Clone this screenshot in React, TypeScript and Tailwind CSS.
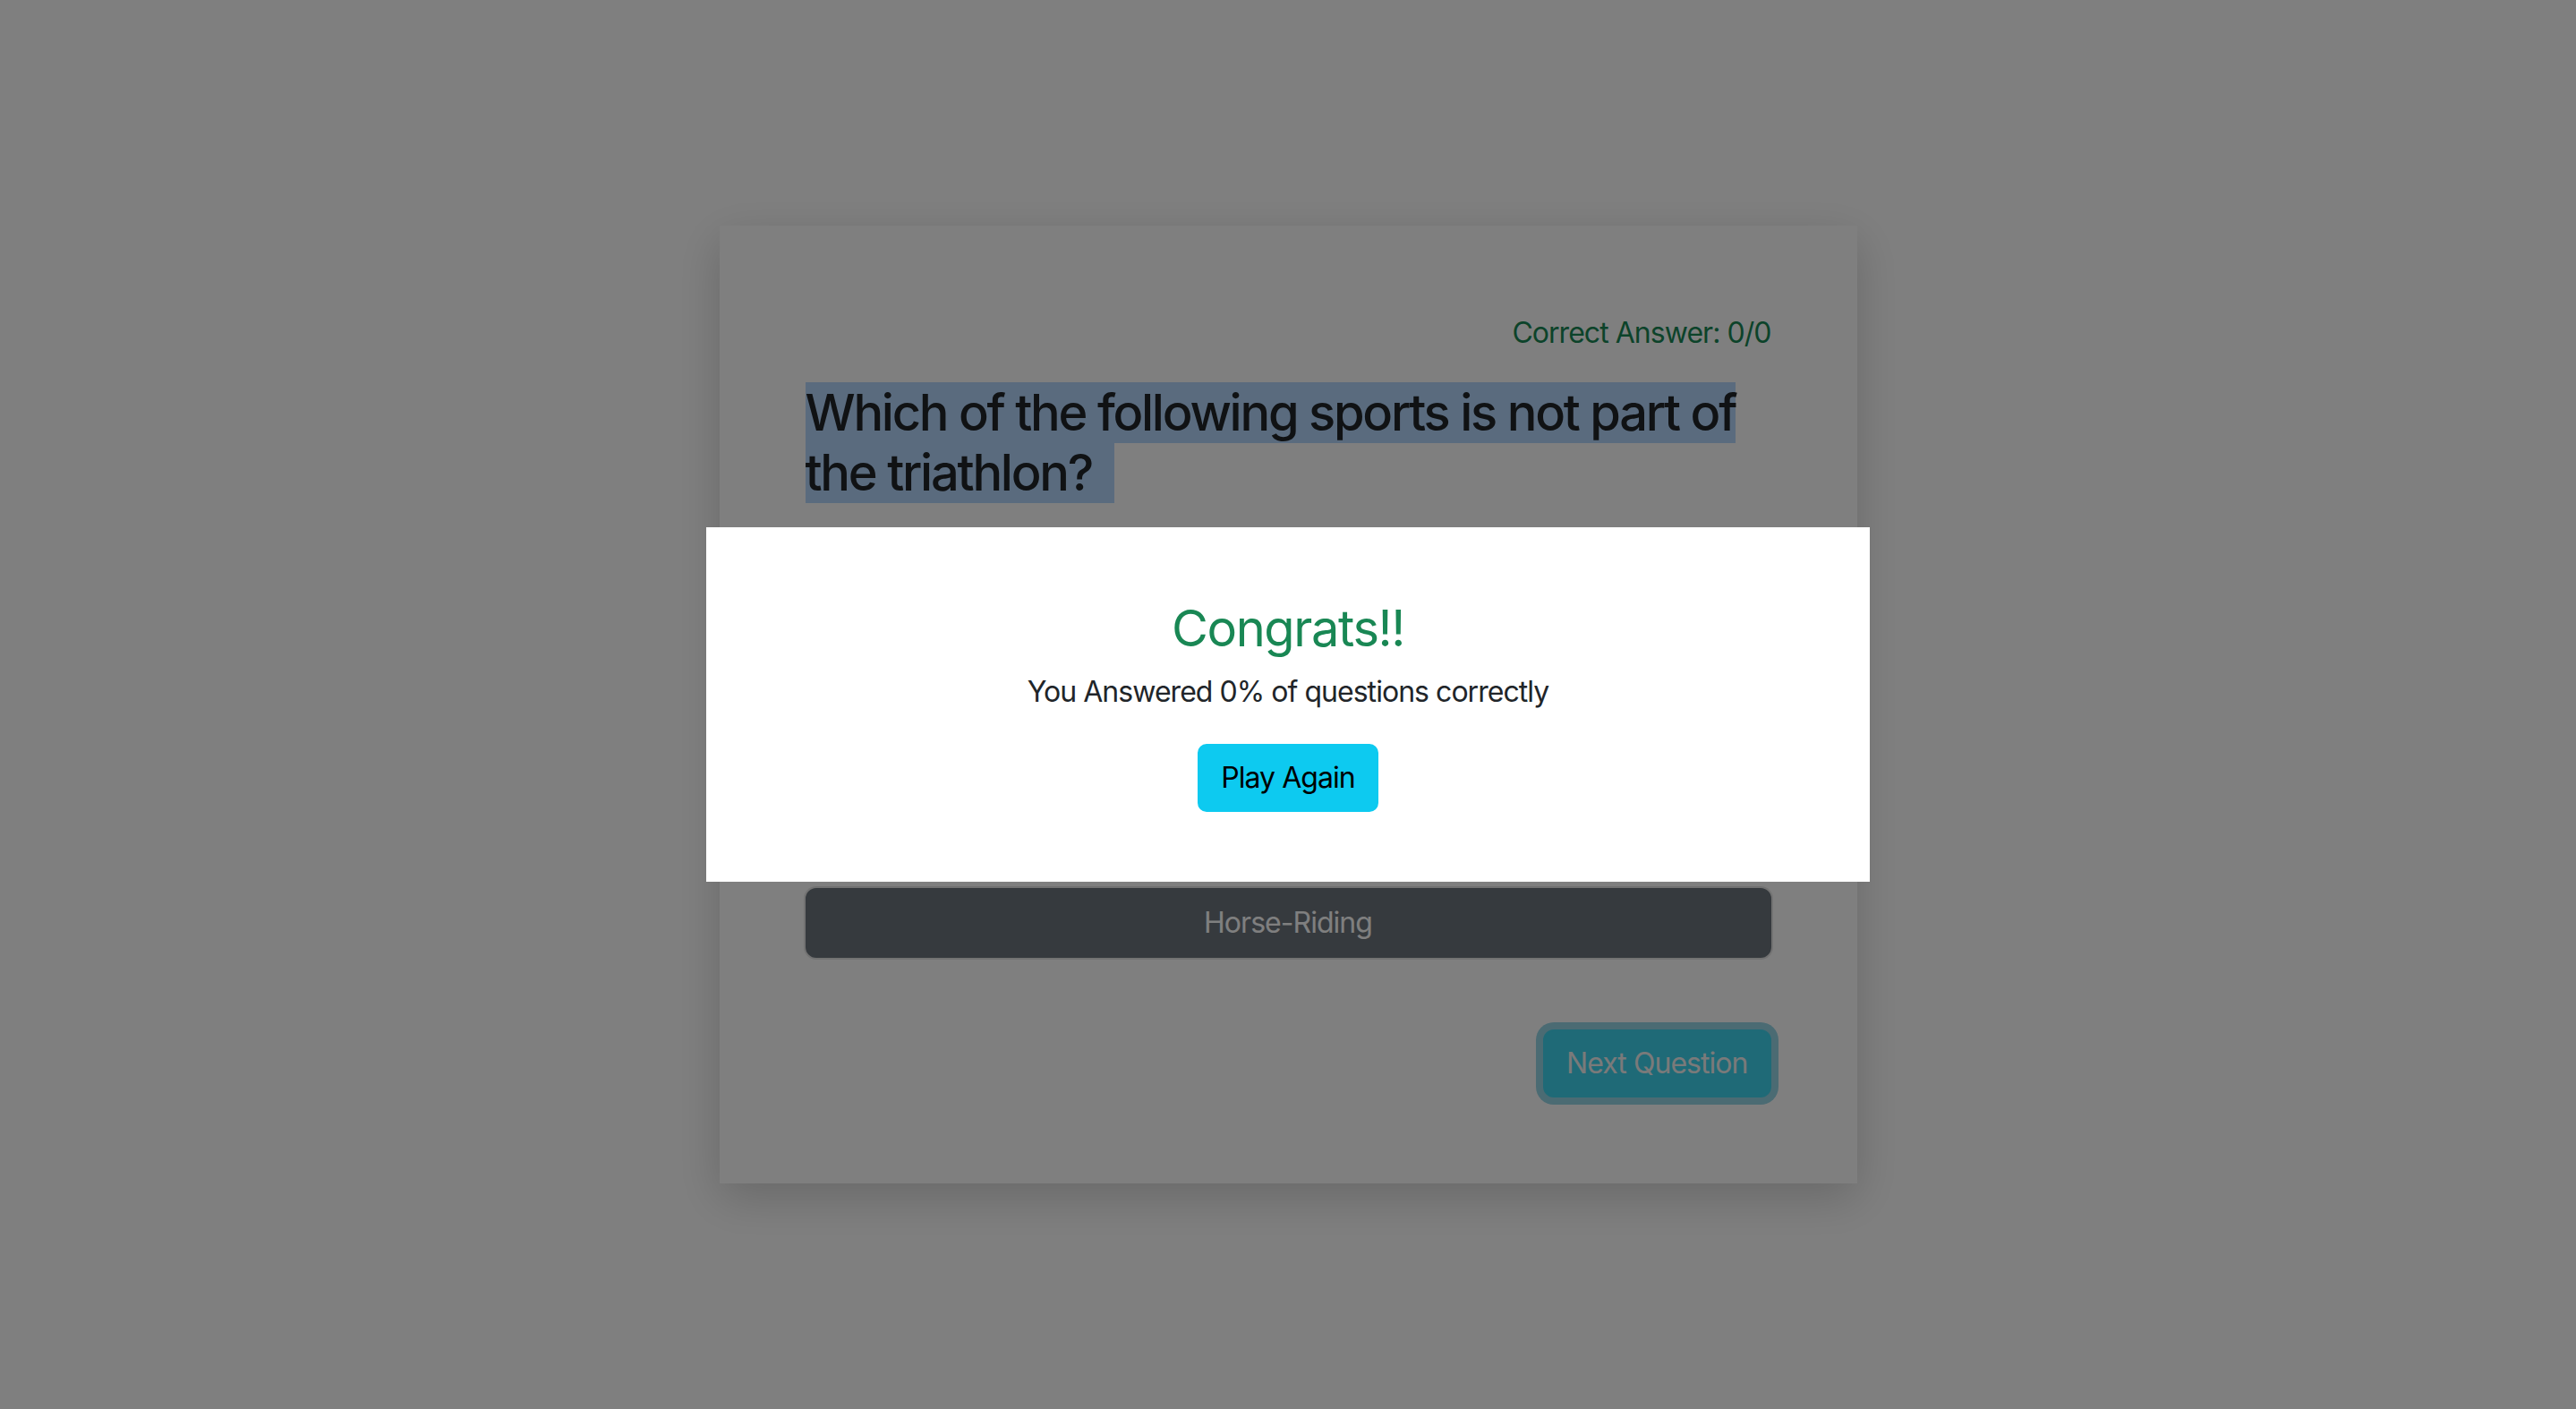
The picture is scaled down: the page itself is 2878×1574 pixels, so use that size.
import React from "react";

const answers = ["Swimming", "Cycling", "Running", "Horse-Riding"];

export default function App() {
  return (
    <div className="min-h-screen bg-white flex items-center justify-center font-['Inter','Liberation_Sans',sans-serif] text-[#212529]">
      {/* quiz card */}
      <div className="w-[1271px] bg-white p-24 shadow-[0_16px_48px_rgba(0,0,0,0.18)]">
        <p className="text-right text-[32px] leading-[48px] tracking-[-0.03em] text-[#198754]">Correct Answer: 0/0</p>
        <h3 className="mt-[32px] text-[56px] leading-[67px] font-medium tracking-[-0.04em]">
          <span className="bg-[#b4d6fc]">Which of the following sports is not part of the triathlon?{"\u00a0\u00a0"}</span>
        </h3>
        <div className="mt-[100px] flex flex-col gap-8">
          {answers.map((a) => (
            <button
              key={a}
              className="w-full rounded-[12px] border-2 border-[#6c757d] bg-[#6c757d] py-[13px] text-[32px] leading-[48px] tracking-[-0.03em] text-white ring-2 ring-black/10"
            >
              {a}
            </button>
          ))}
        </div>
        <div className="mt-[80px] flex justify-end">
          <button className="rounded-[12px] border-2 border-[#3ed4ee] bg-[#3ed4ee] px-6 py-3 text-[32px] leading-[48px] tracking-[-0.03em] text-[#f4f4f4] ring-8 ring-[#96d6e6]">
            Next Question
          </button>
        </div>
      </div>

      {/* modal backdrop */}
      <div className="fixed inset-0 bg-black/50 flex items-center justify-center">
        <div className="w-[1300px] bg-white pt-[80px] pb-[78px] flex flex-col items-center">
          <h3 className="text-[56px] leading-[67px] tracking-[-0.025em] text-[#198754]">Congrats!!</h3>
          <p className="mt-[13px] text-[32px] leading-[48px] tracking-[-0.03em] text-[#212529]">You Answered 0% of questions correctly</p>
          <button className="mt-[34px] rounded-[10px] border-2 border-[#0dcaf0] bg-[#0dcaf0] px-6 py-3 text-[32px] leading-[48px] tracking-[-0.03em] text-black">
            Play Again
          </button>
        </div>
      </div>
    </div>
  );
}
